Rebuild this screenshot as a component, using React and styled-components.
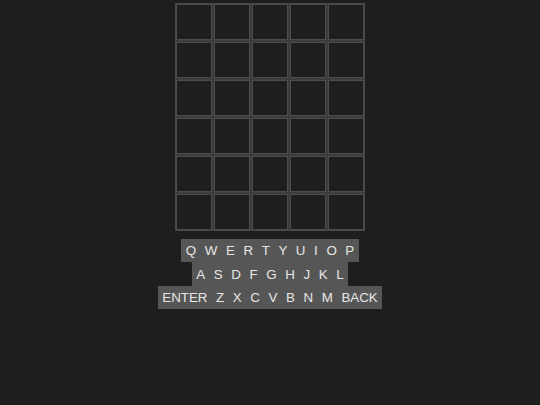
import React from 'react'
import styled, { createGlobalStyle } from 'styled-components'

const GlobalStyle = createGlobalStyle`
    html, body {
        margin: 0;
        padding: 0;
        background: #1e1e1e;
        font-family: "Liberation Sans", Arial, sans-serif;
    }
`;

const Page = styled.div`
    display: flex;
    flex-direction: column;
    align-items: center;
    padding-top: 3px;
    min-height: 405px;
    box-sizing: border-box;
`;

const Board = styled.div`
    display: grid;
    grid-template-columns: repeat(5, 36px);
    grid-auto-rows: 36px;
    gap: 2px;
    border: 1px solid #484848;
    background: #3c3c3c;
`;

const Cell = styled.div`
    box-sizing: border-box;
    border: 1px solid #4c4c4c;
    background: #1e1e1e;
`;

const Keyboard = styled.div`
    display: flex;
    flex-direction: column;
    align-items: center;
    margin-top: 8px;
`;

const KeyRow = styled.div`
    display: flex;
    background: #565656;
    height: 23.4px;
    align-items: center;
`;

const Key = styled.span`
    color: #e6e6e6;
    font-size: 13.33px;
    padding: 0 4.3px;
    line-height: 23px;
`;

const rows = [
    ['Q', 'W', 'E', 'R', 'T', 'Y', 'U', 'I', 'O', 'P'],
    ['A', 'S', 'D', 'F', 'G', 'H', 'J', 'K', 'L'],
    ['ENTER', 'Z', 'X', 'C', 'V', 'B', 'N', 'M', 'BACK'],
];

const App = () => {
    return(
        <Page>
            <GlobalStyle />
            <Board>
                {Array.from({ length: 30 }).map((_, i) => <Cell key={i} />)}
            </Board>
            <Keyboard>
                {rows.map((row, r) => (
                    <KeyRow key={r}>
                        {row.map(k => <Key key={k}>{k}</Key>)}
                    </KeyRow>
                ))}
            </Keyboard>
        </Page>
    )
}

export default App
